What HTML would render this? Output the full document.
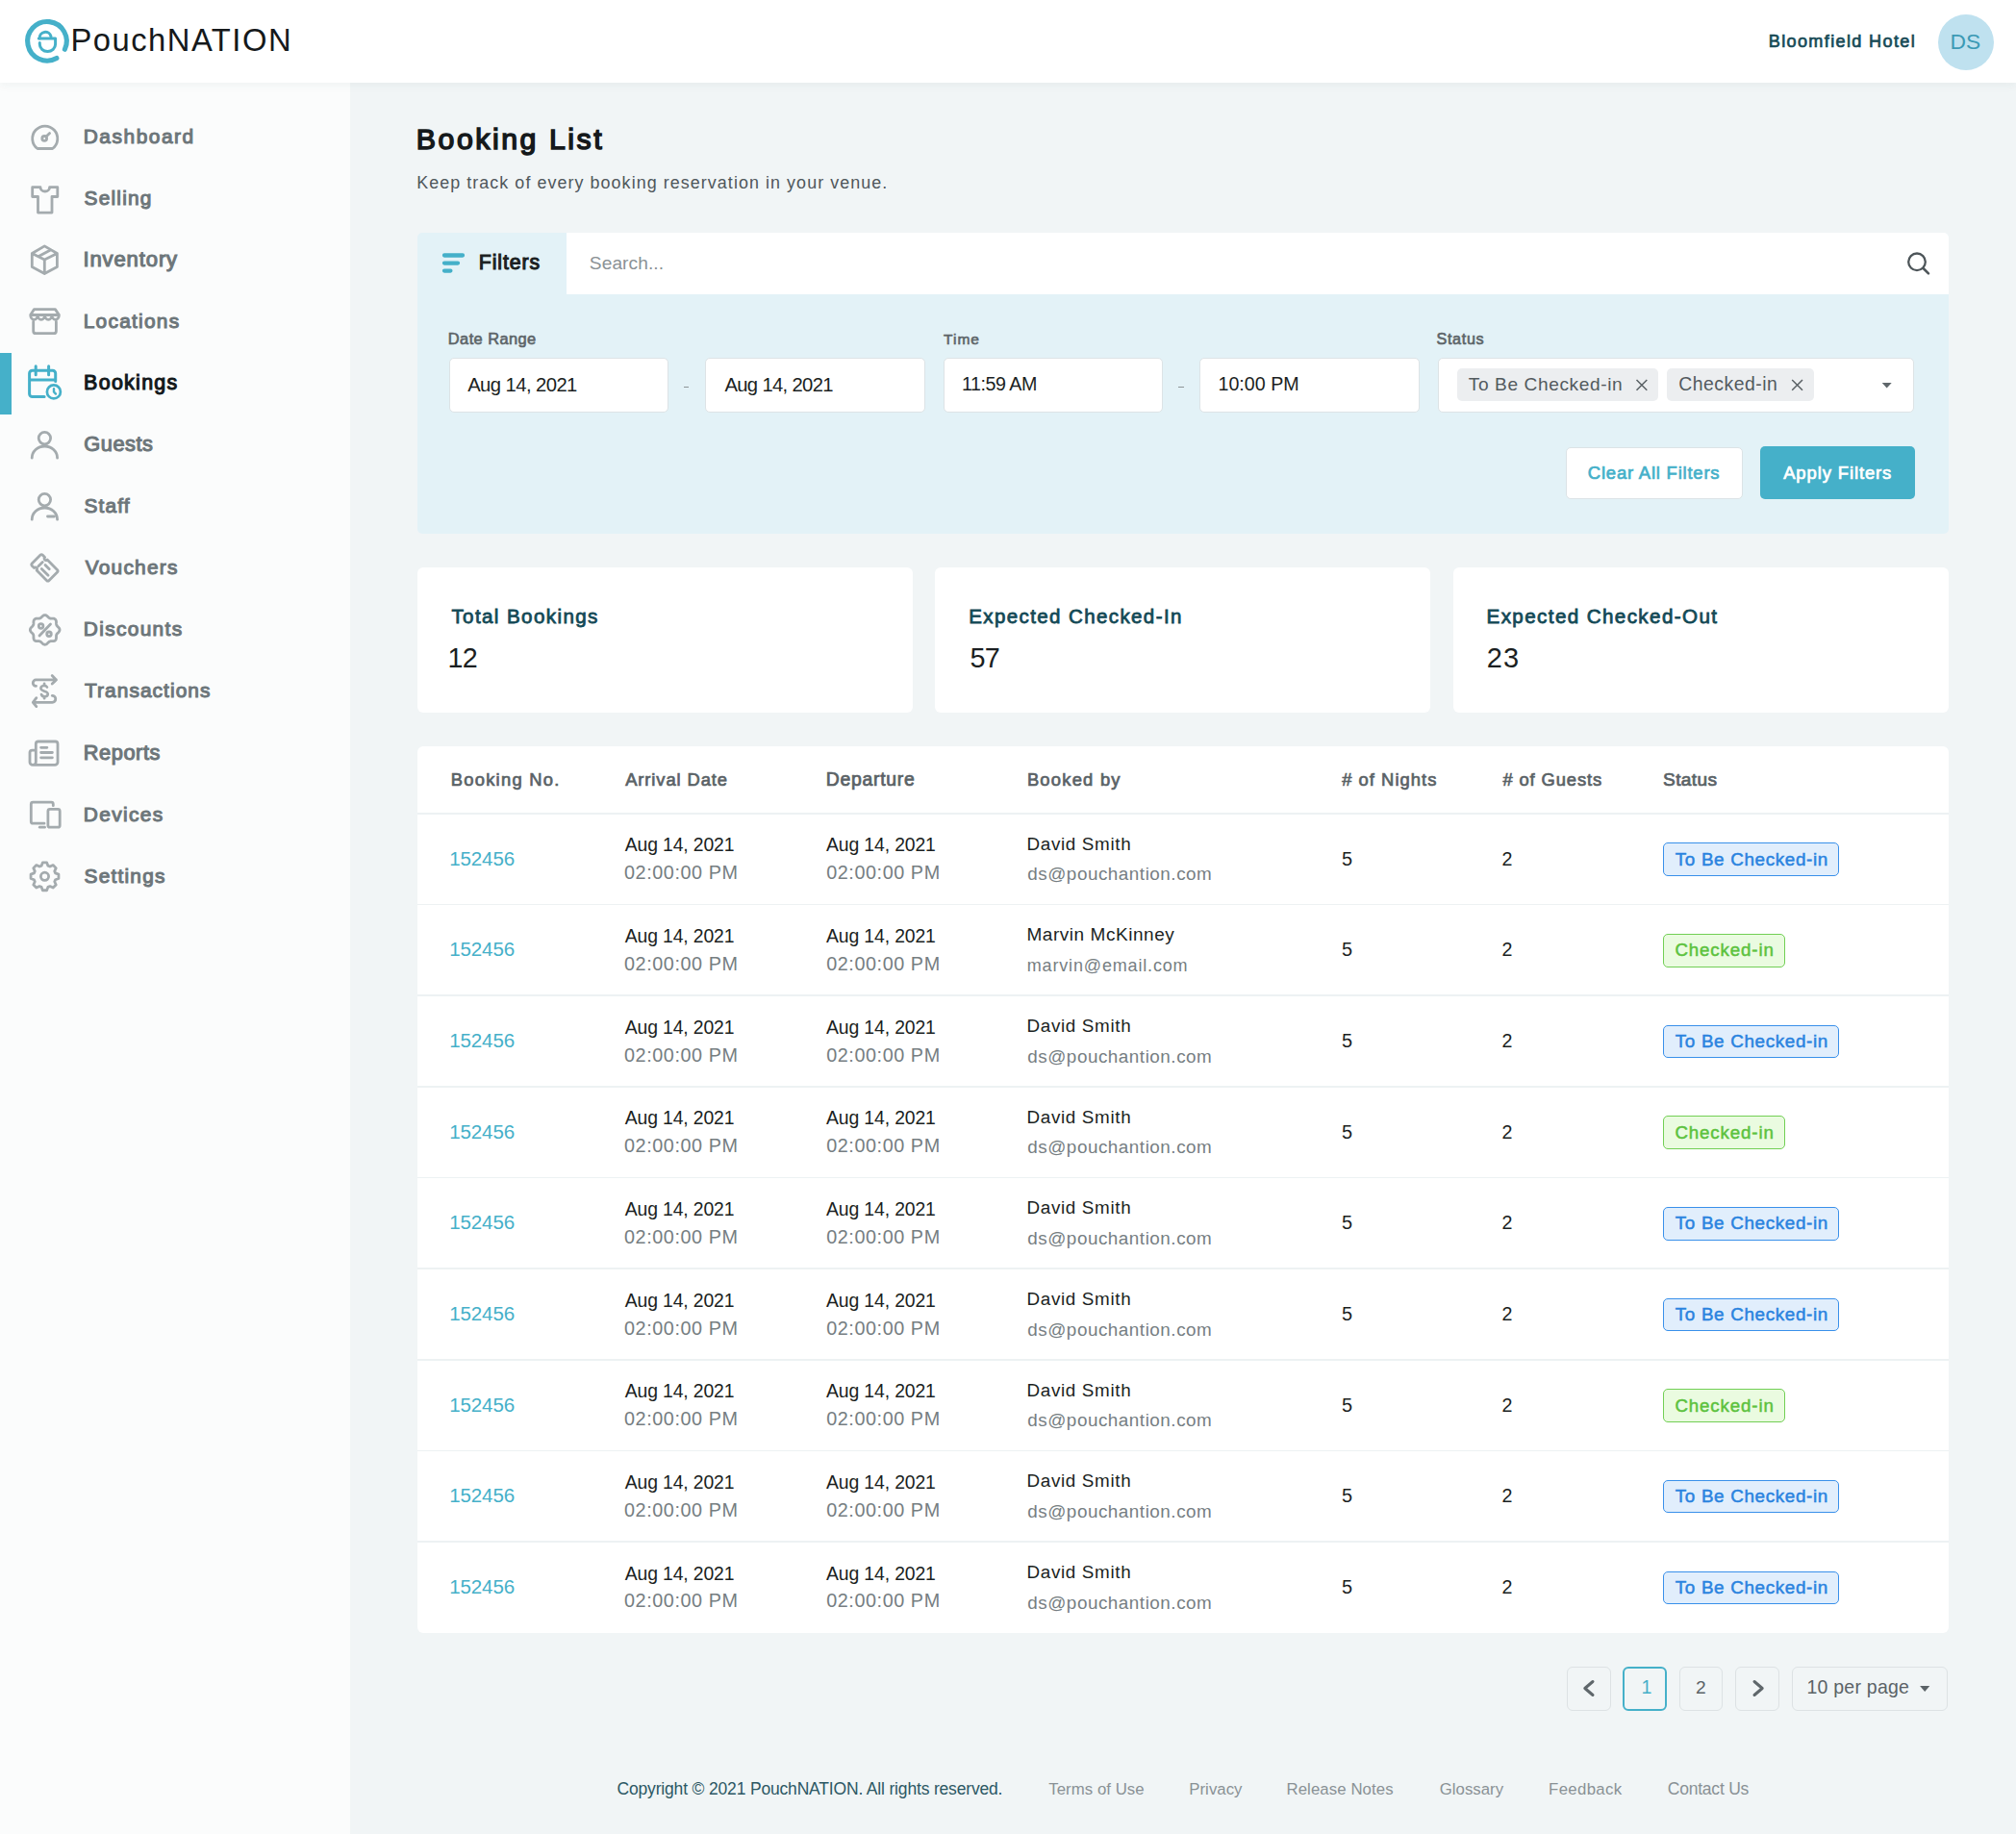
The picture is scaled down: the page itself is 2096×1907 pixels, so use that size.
<!DOCTYPE html>
<html><head><meta charset="utf-8"><title>Booking List</title>
<style>
html,body{margin:0;padding:0;width:2096px;height:1907px;overflow:hidden;background:#f1f5f6}
body{position:relative;font-family:"Liberation Sans",sans-serif}
.t{position:absolute;white-space:pre;line-height:1}
.b{position:absolute}
</style></head><body>
<div class="b" style="left:0px;top:0px;width:2096px;height:1907px;background:#f1f5f6"></div>
<div class="b" style="left:0px;top:86px;width:364px;height:1821px;background:#fbfcfc"></div>
<div class="b" style="left:0px;top:0px;width:2096px;height:86px;background:#ffffff;box-shadow:0 2px 10px rgba(40,60,70,0.06)"></div>
<svg class="b" style="left:0px;top:0px" width="90" height="86" viewBox="0 0 90 86" fill="none">
<path d="M67.4 51.3 A20.3 20.3 0 1 0 58.9 60.5" stroke="#45b0c9" stroke-width="5.1" stroke-linecap="round"/>
<path d="M40.3 39.9 H57.6 V46.1 A8.15 7.5 0 0 1 41.3 46.1 V44.4" stroke="#45b0c9" stroke-width="3" stroke-linecap="round" stroke-linejoin="round"/>
<path d="M41.2 39.9 A6 6 0 0 1 53 37.9" stroke="#45b0c9" stroke-width="3" stroke-linecap="round"/>
</svg>
<div class="t" style="left:73.38px;top:25.97px;font-size:32.75px;font-weight:400;color:#15191b;letter-spacing:1.505px;">PouchNATION</div>
<div class="t" style="left:1838.72px;top:33.99px;font-size:18.08px;font-weight:400;color:#174a56;letter-spacing:1.358px;-webkit-text-stroke:0.69px #174a56;">Bloomfield Hotel</div>
<div class="b" style="left:2014.5px;top:14.5px;width:58px;height:58px;border-radius:50%;background:#bfe1ef"></div>
<div class="t" style="left:2027.57px;top:31.68px;font-size:22.82px;font-weight:400;color:#3c9ab5;letter-spacing:-0.156px;">DS</div>
<svg class="b" style="left:0px;top:86px" width="364" height="900" viewBox="0 86 364 900" fill="none">
<path d="M38.9 154.5 A13.05 13.05 0 1 1 54.6 154.5 Z" stroke="#a4abae" stroke-width="2.8" stroke-linecap="round" stroke-linejoin="round" fill="none"/>
<circle cx="46.2" cy="143.9" r="2.4" stroke="#a4abae" stroke-width="2.8" stroke-linecap="round" stroke-linejoin="round" fill="none"/><path d="M48 142 L51.6 138.6" stroke="#a4abae" stroke-width="2.8" stroke-linecap="round" stroke-linejoin="round" fill="none"/>
<path d="M33.7 194.7 H42 A4.8 4.3 0 0 0 51.6 194.7 H59.8 V204.5 H54 V221.1 H39.5 V204.5 H33.7 Z" stroke="#a4abae" stroke-width="2.8" stroke-linecap="round" stroke-linejoin="round" fill="none"/>
<path d="M46.3 255.9 L59.4 263.5 V277.5 L46.3 284.5 L33.3 277.5 V263.5 Z M33.3 263.5 L46.3 269.9 L59.4 263.5 M46.3 269.9 V284.5 M39.8 266.7 L52.9 259.7" stroke="#a4abae" stroke-width="2.8" stroke-linecap="round" stroke-linejoin="round" fill="none"/>
<path d="M35.5 321.6 H57.4 L61.4 327.5 A3.71 4.8 0 0 1 53.98 327.5 A3.71 4.8 0 0 1 46.55 327.5 A3.71 4.8 0 0 1 39.13 327.5 A3.71 4.8 0 0 1 31.7 327.5 Z M31.7 327.5 H61.4" stroke="#a4abae" stroke-width="2.8" stroke-linecap="round" stroke-linejoin="round" fill="none"/>
<path d="M34.7 334.5 V344.2 A2.5 2.5 0 0 0 37.2 346.7 H55.9 A2.5 2.5 0 0 0 58.4 344.2 V334.5" stroke="#a4abae" stroke-width="2.8" stroke-linecap="round" stroke-linejoin="round" fill="none"/>
<circle cx="46.4" cy="455.6" r="6.2" stroke="#a4abae" stroke-width="2.8" stroke-linecap="round" stroke-linejoin="round" fill="none"/><path d="M33.2 476.2 A13.2 12.2 0 0 1 59.6 476.2" stroke="#a4abae" stroke-width="2.8" stroke-linecap="round" stroke-linejoin="round" fill="none"/>
<circle cx="46.4" cy="519.6" r="6.2" stroke="#a4abae" stroke-width="2.8" stroke-linecap="round" stroke-linejoin="round" fill="none"/><path d="M33.2 540.2 A13.2 12.2 0 0 1 59.6 540.2" stroke="#a4abae" stroke-width="2.8" stroke-linecap="round" stroke-linejoin="round" fill="none"/><path d="M49.5 537 H56.5" stroke="#a4abae" stroke-width="2.8" stroke-linecap="round" stroke-linejoin="round" fill="none"/>
<g transform="translate(46.45 590.4) rotate(45)"><path d="M-11 -7.8 H-7.6 A1.8 1.8 0 0 0 -4 -7.8 H11 A1.5 1.5 0 0 1 12.5 -6.3 V6.3 A1.5 1.5 0 0 1 11 7.8 H-4 A1.8 1.8 0 0 0 -7.6 7.8 H-11 A1.5 1.5 0 0 1 -12.5 6.3 V-6.3 A1.5 1.5 0 0 1 -11 -7.8 Z" stroke="#a4abae" stroke-width="2.8" stroke-linecap="round" stroke-linejoin="round" fill="none"/>
<path d="M-5.8 -2.7 V3.5 M-1.6 -2.4 H4.4 M-1.5 3 H8.1" stroke="#a4abae" stroke-width="2.8" stroke-linecap="round" stroke-linejoin="round" fill="none"/></g>
<path d="M46.70 639.55 L47.30 639.62 L47.89 639.82 L48.45 640.13 L48.98 640.52 L49.47 640.97 L49.93 641.44 L50.37 641.88 L50.80 642.28 L51.24 642.60 L51.69 642.84 L52.19 643.00 L52.72 643.08 L53.31 643.10 L53.93 643.10 L54.59 643.09 L55.26 643.12 L55.91 643.22 L56.53 643.39 L57.08 643.67 L57.55 644.05 L57.93 644.52 L58.21 645.07 L58.38 645.69 L58.48 646.34 L58.51 647.01 L58.50 647.67 L58.50 648.29 L58.52 648.88 L58.60 649.41 L58.76 649.91 L59.00 650.36 L59.32 650.80 L59.72 651.23 L60.16 651.67 L60.63 652.13 L61.08 652.62 L61.47 653.15 L61.78 653.71 L61.98 654.30 L62.05 654.90 L61.98 655.50 L61.78 656.09 L61.47 656.65 L61.08 657.18 L60.63 657.67 L60.16 658.13 L59.72 658.57 L59.32 659.00 L59.00 659.44 L58.76 659.89 L58.60 660.39 L58.52 660.92 L58.50 661.51 L58.50 662.13 L58.51 662.79 L58.48 663.46 L58.38 664.11 L58.21 664.73 L57.93 665.28 L57.55 665.75 L57.08 666.13 L56.53 666.41 L55.91 666.58 L55.26 666.68 L54.59 666.71 L53.93 666.70 L53.31 666.70 L52.72 666.72 L52.19 666.80 L51.69 666.96 L51.24 667.20 L50.80 667.52 L50.37 667.92 L49.93 668.36 L49.47 668.83 L48.98 669.28 L48.45 669.67 L47.89 669.98 L47.30 670.18 L46.70 670.25 L46.10 670.18 L45.51 669.98 L44.95 669.67 L44.42 669.28 L43.93 668.83 L43.47 668.36 L43.03 667.92 L42.60 667.52 L42.16 667.20 L41.71 666.96 L41.21 666.80 L40.68 666.72 L40.09 666.70 L39.47 666.70 L38.81 666.71 L38.14 666.68 L37.49 666.58 L36.87 666.41 L36.32 666.13 L35.85 665.75 L35.47 665.28 L35.19 664.73 L35.02 664.11 L34.92 663.46 L34.89 662.79 L34.90 662.13 L34.90 661.51 L34.88 660.92 L34.80 660.39 L34.64 659.89 L34.40 659.44 L34.08 659.00 L33.68 658.57 L33.24 658.13 L32.77 657.67 L32.32 657.18 L31.93 656.65 L31.62 656.09 L31.42 655.50 L31.35 654.90 L31.42 654.30 L31.62 653.71 L31.93 653.15 L32.32 652.62 L32.77 652.13 L33.24 651.67 L33.68 651.23 L34.08 650.80 L34.40 650.36 L34.64 649.91 L34.80 649.41 L34.88 648.88 L34.90 648.29 L34.90 647.67 L34.89 647.01 L34.92 646.34 L35.02 645.69 L35.19 645.07 L35.47 644.52 L35.85 644.05 L36.32 643.67 L36.87 643.39 L37.49 643.22 L38.14 643.12 L38.81 643.09 L39.47 643.10 L40.09 643.10 L40.68 643.08 L41.21 643.00 L41.71 642.84 L42.16 642.60 L42.60 642.28 L43.03 641.88 L43.47 641.44 L43.93 640.97 L44.42 640.52 L44.95 640.13 L45.51 639.82 L46.10 639.62 Z" stroke="#a4abae" stroke-width="2.8" stroke-linecap="round" stroke-linejoin="round" fill="none"/>
<circle cx="42.6" cy="651" r="2.3" stroke="#a4abae" stroke-width="2.8" stroke-linecap="round" stroke-linejoin="round" fill="none"/><circle cx="51" cy="659.3" r="2.3" stroke="#a4abae" stroke-width="2.8" stroke-linecap="round" stroke-linejoin="round" fill="none"/><path d="M41 661 L52.5 649" stroke="#a4abae" stroke-width="2.8" stroke-linecap="round" stroke-linejoin="round" fill="none"/>
<path d="M37.5 713.3 A3.2 3.2 0 0 1 37.4 706.9 H58.5 M54.2 702.6 L58.5 706.9 L54.2 711.1" stroke="#a4abae" stroke-width="2.8" stroke-linecap="round" stroke-linejoin="round" fill="none"/>
<path d="M54.2 723.3 A3.5 3.5 0 0 1 54.4 730.3 H34.3 M37.8 725.7 L34.3 730.3 L37.8 734.6" stroke="#a4abae" stroke-width="2.8" stroke-linecap="round" stroke-linejoin="round" fill="none"/>
<path d="M49 714.6 C48 712.3 42.4 712.3 42.4 715.8 C42.4 719.2 49.8 718.2 49.8 721.6 C49.8 725 44 725.2 43 722" stroke="#a4abae" stroke-width="2.6" stroke-linecap="round" fill="none"/>
<path d="M46.1 711 V712.3 M46.1 724.8 V726.2" stroke="#a4abae" stroke-width="2.8" stroke-linecap="round" stroke-linejoin="round" fill="none"/>
<path d="M37.3 780.1 H33.5 A2.5 2.5 0 0 0 31 782.6 V792.4 A3 3 0 0 0 34 795.4 H57 A3 3 0 0 0 60 792.4 V773.5 A2.5 2.5 0 0 0 57.5 771 H39.8 A2.5 2.5 0 0 0 37.3 773.5 V792.4 A3 3 0 0 1 34 795.4" stroke="#a4abae" stroke-width="2.8" stroke-linecap="round" stroke-linejoin="round" fill="none"/>
<path d="M42.6 777.3 H48.9 M42.6 782.5 H54.4 M42.6 787.8 H54.4" stroke="#a4abae" stroke-width="2.8" stroke-linecap="round" stroke-linejoin="round" fill="none"/>
<path d="M55.3 837.7 V836.2 A2 2 0 0 0 53.3 834.2 H34.3 A2 2 0 0 0 32.3 836.2 V854.2 A2 2 0 0 0 34.3 856.2 H46" stroke="#a4abae" stroke-width="2.8" stroke-linecap="round" stroke-linejoin="round" fill="none"/>
<path d="M41.3 860.2 H46.5" stroke="#a4abae" stroke-width="2.8" stroke-linecap="round" stroke-linejoin="round" fill="none"/>
<rect x="49.9" y="841.4" width="12.3" height="18.8" rx="2" stroke="#a4abae" stroke-width="2.8" stroke-linecap="round" stroke-linejoin="round" fill="none"/>
<path d="M43.11 900.21 L44.34 896.86 L48.66 896.86 L49.89 900.21 L51.95 901.06 L55.18 899.56 L58.24 902.62 L56.74 905.85 L57.59 907.91 L60.94 909.14 L60.94 913.46 L57.59 914.69 L56.74 916.75 L58.24 919.98 L55.18 923.04 L51.95 921.54 L49.89 922.39 L48.66 925.74 L44.34 925.74 L43.11 922.39 L41.05 921.54 L37.82 923.04 L34.76 919.98 L36.26 916.75 L35.41 914.69 L32.06 913.46 L32.06 909.14 L35.41 907.91 L36.26 905.85 L34.76 902.62 L37.82 899.56 L41.05 901.06 Z" stroke="#a4abae" stroke-width="2.8" stroke-linecap="round" stroke-linejoin="round" fill="none"/>
<circle cx="46.5" cy="911.3" r="4.1" stroke="#a4abae" stroke-width="2.8" stroke-linecap="round" stroke-linejoin="round" fill="none"/>
</svg>
<div class="b" style="left:0px;top:367px;width:12px;height:64px;background:#45b0c9"></div>
<svg class="b" style="left:0px;top:367px" width="100" height="64" viewBox="0 367 100 64" fill="none"><path d="M46.1 412.5 H33.6 A3 3 0 0 1 30.6 409.5 V388.2 A3 3 0 0 1 33.6 385.2 H54.7 A3 3 0 0 1 57.7 388.2 V396.6 M30.6 395.1 H57.7 M37.2 380.8 V389.7 M50.6 380.8 V389.7" stroke="#45b0c9" stroke-width="3" stroke-linecap="round" stroke-linejoin="round" fill="none"/><circle cx="55.9" cy="407.4" r="7" stroke="#45b0c9" stroke-width="2.7" fill="none"/><path d="M56 404.3 V407.5 L58 409.6" stroke="#45b0c9" stroke-width="2.4" stroke-linecap="round" stroke-linejoin="round" fill="none"/></svg>
<div class="t" style="left:86.75px;top:132.31px;font-size:20.89px;font-weight:400;color:#6d767a;letter-spacing:1.541px;-webkit-text-stroke:1.04px #6d767a;">Dashboard</div>
<div class="t" style="left:87.58px;top:196.36px;font-size:20.89px;font-weight:400;color:#6d767a;letter-spacing:1.196px;-webkit-text-stroke:1.04px #6d767a;">Selling</div>
<div class="t" style="left:86.45px;top:259.41px;font-size:22.07px;font-weight:400;color:#6d767a;letter-spacing:0.870px;-webkit-text-stroke:1.10px #6d767a;">Inventory</div>
<div class="t" style="left:86.75px;top:324.46px;font-size:20.89px;font-weight:400;color:#6d767a;letter-spacing:1.256px;-webkit-text-stroke:1.04px #6d767a;">Locations</div>
<div class="t" style="left:87.11px;top:388.06px;font-size:21.43px;font-weight:400;color:#12181b;letter-spacing:1.290px;-webkit-text-stroke:1.07px #12181b;">Bookings</div>
<div class="t" style="left:87.35px;top:450.82px;font-size:21.77px;font-weight:400;color:#6d767a;letter-spacing:0.534px;-webkit-text-stroke:1.09px #6d767a;">Guests</div>
<div class="t" style="left:87.58px;top:515.61px;font-size:20.89px;font-weight:400;color:#6d767a;letter-spacing:1.095px;-webkit-text-stroke:1.04px #6d767a;">Staff</div>
<div class="t" style="left:88.63px;top:579.66px;font-size:20.89px;font-weight:400;color:#6d767a;letter-spacing:1.266px;-webkit-text-stroke:1.04px #6d767a;">Vouchers</div>
<div class="t" style="left:86.75px;top:643.71px;font-size:20.89px;font-weight:400;color:#6d767a;letter-spacing:1.343px;-webkit-text-stroke:1.04px #6d767a;">Discounts</div>
<div class="t" style="left:88.00px;top:707.76px;font-size:20.89px;font-weight:400;color:#6d767a;letter-spacing:1.067px;-webkit-text-stroke:1.04px #6d767a;">Transactions</div>
<div class="t" style="left:86.69px;top:772.07px;font-size:21.77px;font-weight:400;color:#6d767a;letter-spacing:0.590px;-webkit-text-stroke:1.09px #6d767a;">Reports</div>
<div class="t" style="left:86.75px;top:836.86px;font-size:20.89px;font-weight:400;color:#6d767a;letter-spacing:1.348px;-webkit-text-stroke:1.04px #6d767a;">Devices</div>
<div class="t" style="left:87.58px;top:900.91px;font-size:20.89px;font-weight:400;color:#6d767a;letter-spacing:1.201px;-webkit-text-stroke:1.04px #6d767a;">Settings</div>
<div class="t" style="left:432.78px;top:130.07px;font-size:30.27px;font-weight:400;color:#15191b;letter-spacing:2.551px;-webkit-text-stroke:1.51px #15191b;">Booking List</div>
<div class="t" style="left:433.17px;top:182.05px;font-size:17.89px;font-weight:400;color:#4f575b;letter-spacing:1.073px;">Keep track of every booking reservation in your venue.</div>
<div class="b" style="left:434px;top:242px;width:1592px;height:312.8px;background:#e3f2f7;border-radius:5px"></div>
<div class="b" style="left:588.5px;top:242px;width:1437.5px;height:63.5px;background:#ffffff;border-radius:0 5px 0 0"></div>
<svg class="b" style="left:440px;top:250px" width="60" height="40" viewBox="440 250 60 40" fill="none"><path d="M462 265.5 H481 M462 273.6 H476 M462 281.6 H468.4" stroke="#45b0c9" stroke-width="4.3" stroke-linecap="round"/></svg>
<div class="t" style="left:497.72px;top:262.77px;font-size:21.29px;font-weight:400;color:#1b1f22;letter-spacing:0.929px;-webkit-text-stroke:1.06px #1b1f22;">Filters</div>
<div class="t" style="left:612.84px;top:263.60px;font-size:19.13px;font-weight:400;color:#8a9195;letter-spacing:0.096px;">Search...</div>
<svg class="b" style="left:1975px;top:255px" width="40" height="40" viewBox="1975 255 40 40" fill="none"><circle cx="1993" cy="272.3" r="8.8" stroke="#4d5559" stroke-width="2.3"/><path d="M1999.6 279 L2005 284.4" stroke="#4d5559" stroke-width="2.5" stroke-linecap="round"/></svg>
<div class="t" style="left:465.82px;top:344.10px;font-size:16.41px;font-weight:400;color:#5c6468;letter-spacing:0.425px;-webkit-text-stroke:0.62px #5c6468;">Date Range</div>
<div class="t" style="left:981.00px;top:344.85px;font-size:15.54px;font-weight:400;color:#5c6468;letter-spacing:1.015px;-webkit-text-stroke:0.59px #5c6468;">Time</div>
<div class="t" style="left:1493.48px;top:344.30px;font-size:16.19px;font-weight:400;color:#5c6468;letter-spacing:0.656px;-webkit-text-stroke:0.62px #5c6468;">Status</div>
<div class="b" style="left:466.5px;top:372px;width:228.7px;height:56.5px;background:#ffffff;border:1.2px solid #dde3e6;border-radius:5px;box-sizing:border-box"></div>
<div class="b" style="left:733px;top:372px;width:228.7px;height:56.5px;background:#ffffff;border:1.2px solid #dde3e6;border-radius:5px;box-sizing:border-box"></div>
<div class="b" style="left:980.5px;top:372px;width:228.8px;height:56.5px;background:#ffffff;border:1.2px solid #dde3e6;border-radius:5px;box-sizing:border-box"></div>
<div class="b" style="left:1247.3px;top:372px;width:228.7px;height:56.5px;background:#ffffff;border:1.2px solid #dde3e6;border-radius:5px;box-sizing:border-box"></div>
<div class="t" style="left:486.20px;top:390.46px;font-size:20.24px;font-weight:400;color:#1b1f22;letter-spacing:-0.564px;">Aug 14, 2021</div>
<div class="t" style="left:753.40px;top:390.46px;font-size:20.24px;font-weight:400;color:#1b1f22;letter-spacing:-0.655px;">Aug 14, 2021</div>
<div class="t" style="left:1000.03px;top:389.55px;font-size:19.66px;font-weight:400;color:#1b1f22;letter-spacing:-0.466px;">11:59 AM</div>
<div class="t" style="left:1266.43px;top:389.55px;font-size:19.66px;font-weight:400;color:#1b1f22;letter-spacing:0.026px;">10:00 PM</div>
<div class="b" style="left:710.7px;top:401.8px;width:5.3px;height:1.5px;background:#8e9598"></div>
<div class="b" style="left:1225.3px;top:401.8px;width:5.3px;height:1.5px;background:#8e9598"></div>
<div class="b" style="left:1494.5px;top:372px;width:495.7px;height:56.5px;background:#ffffff;border:1.2px solid #dde3e6;border-radius:5px;box-sizing:border-box"></div>
<div class="b" style="left:1515px;top:382.8px;width:209.2px;height:34.7px;background:#eceef0;border-radius:5px"></div>
<div class="b" style="left:1733.3px;top:382.8px;width:152.4px;height:34.7px;background:#eceef0;border-radius:5px"></div>
<div class="t" style="left:1526.82px;top:390.00px;font-size:19.13px;font-weight:400;color:#535a5e;letter-spacing:0.601px;">To Be Checked-in</div>
<div class="t" style="left:1745.23px;top:389.77px;font-size:19.40px;font-weight:400;color:#535a5e;letter-spacing:0.506px;">Checked-in</div>
<svg class="b" style="left:1690px;top:385px" width="290" height="30" viewBox="1690 385 290 30" fill="none"><path d="M1701.5 395 L1712.3 405.8 M1712.3 395 L1701.5 405.8 M1863.2 395 L1874 405.8 M1874 395 L1863.2 405.8" stroke="#5a6165" stroke-width="1.5"/><path d="M1956.7 398.1 H1966.7 L1961.7 403.6 Z" fill="#5f676b"/></svg>
<div class="b" style="left:1628px;top:464.5px;width:183.5px;height:54.5px;background:#ffffff;border:1.2px solid #dce3e6;border-radius:5px;box-sizing:border-box"></div>
<div class="t" style="left:1650.85px;top:483.35px;font-size:18.48px;font-weight:400;color:#45b0c9;letter-spacing:0.783px;-webkit-text-stroke:0.70px #45b0c9;">Clear All Filters</div>
<div class="b" style="left:1829.5px;top:464px;width:161.5px;height:55px;background:#45b0c9;border-radius:5px"></div>
<div class="t" style="left:1854.17px;top:483.35px;font-size:18.48px;font-weight:400;color:#ffffff;letter-spacing:0.879px;-webkit-text-stroke:0.70px #ffffff;">Apply Filters</div>
<div class="b" style="left:434px;top:589.7px;width:514.7px;height:151px;background:#ffffff;border-radius:6px"></div>
<div class="t" style="left:469.40px;top:630.84px;font-size:20.62px;font-weight:400;color:#134956;letter-spacing:1.381px;-webkit-text-stroke:0.78px #134956;">Total Bookings</div>
<div class="t" style="left:465.54px;top:670.19px;font-size:28.71px;font-weight:400;color:#1b1f22;letter-spacing:-0.800px;">12</div>
<div class="b" style="left:972.3px;top:589.7px;width:514.7px;height:151px;background:#ffffff;border-radius:6px"></div>
<div class="t" style="left:1007.17px;top:630.65px;font-size:20.49px;font-weight:400;color:#134956;letter-spacing:1.409px;-webkit-text-stroke:0.78px #134956;">Expected Checked-In</div>
<div class="t" style="left:1008.44px;top:669.99px;font-size:28.83px;font-weight:400;color:#1b1f22;letter-spacing:-0.800px;">57</div>
<div class="b" style="left:1511px;top:589.7px;width:514.7px;height:151px;background:#ffffff;border-radius:6px"></div>
<div class="t" style="left:1545.56px;top:630.94px;font-size:20.62px;font-weight:400;color:#134956;letter-spacing:1.388px;-webkit-text-stroke:0.78px #134956;">Expected Checked-Out</div>
<div class="t" style="left:1545.75px;top:669.95px;font-size:28.99px;font-weight:400;color:#1b1f22;letter-spacing:1.026px;">23</div>
<div class="b" style="left:434px;top:775.8px;width:1592px;height:921.8px;background:#ffffff;border-radius:6px"></div>
<div class="t" style="left:468.70px;top:802.27px;font-size:18.35px;font-weight:400;color:#5a6266;letter-spacing:1.279px;-webkit-text-stroke:0.70px #5a6266;">Booking No.</div>
<div class="t" style="left:650.17px;top:802.27px;font-size:18.35px;font-weight:400;color:#5a6266;letter-spacing:0.912px;-webkit-text-stroke:0.70px #5a6266;">Arrival Date</div>
<div class="t" style="left:858.84px;top:801.39px;font-size:19.39px;font-weight:400;color:#5a6266;letter-spacing:0.710px;-webkit-text-stroke:0.74px #5a6266;">Departure</div>
<div class="t" style="left:1067.90px;top:802.27px;font-size:18.35px;font-weight:400;color:#5a6266;letter-spacing:1.244px;-webkit-text-stroke:0.70px #5a6266;">Booked by</div>
<div class="t" style="left:1395.18px;top:802.27px;font-size:18.35px;font-weight:400;color:#5a6266;letter-spacing:1.048px;-webkit-text-stroke:0.70px #5a6266;"># of Nights</div>
<div class="t" style="left:1562.38px;top:802.27px;font-size:18.35px;font-weight:400;color:#5a6266;letter-spacing:0.904px;-webkit-text-stroke:0.70px #5a6266;"># of Guests</div>
<div class="t" style="left:1729.02px;top:800.61px;font-size:19.12px;font-weight:400;color:#5a6266;letter-spacing:0.375px;-webkit-text-stroke:0.73px #5a6266;">Status</div>
<div class="b" style="left:434px;top:845.0px;width:1592px;height:1.8px;background:#edf2f3"></div>
<div class="t" style="left:467.16px;top:883.32px;font-size:20.53px;font-weight:400;color:#45b0c9;letter-spacing:-0.097px;">152456</div>
<div class="t" style="left:649.80px;top:868.99px;font-size:19.38px;font-weight:400;color:#1b1f22;letter-spacing:-0.139px;">Aug 14, 2021</div>
<div class="t" style="left:649.01px;top:897.53px;font-size:19.81px;font-weight:400;color:#767e82;letter-spacing:0.567px;">02:00:00 PM</div>
<div class="t" style="left:859.00px;top:868.99px;font-size:19.38px;font-weight:400;color:#1b1f22;letter-spacing:-0.120px;">Aug 14, 2021</div>
<div class="t" style="left:859.21px;top:897.53px;font-size:19.81px;font-weight:400;color:#767e82;letter-spacing:0.567px;">02:00:00 PM</div>
<div class="t" style="left:1067.49px;top:868.84px;font-size:18.85px;font-weight:400;color:#1b1f22;letter-spacing:0.663px;">David Smith</div>
<div class="t" style="left:1068.25px;top:900.44px;font-size:18.85px;font-weight:400;color:#767e82;letter-spacing:0.529px;">ds@pouchantion.com</div>
<div class="t" style="left:1395.00px;top:883.91px;font-size:19.95px;font-weight:400;color:#1b1f22;letter-spacing:0.000px;">5</div>
<div class="t" style="left:1561.42px;top:884.15px;font-size:19.66px;font-weight:400;color:#1b1f22;letter-spacing:0.000px;">2</div>
<div class="b" style="left:1729.4px;top:876.4px;width:183.1px;height:34.5px;background:#e1eefc;border:1.8px solid #3990ea;border-radius:5px;box-sizing:border-box"></div>
<div class="t" style="left:1741.81px;top:884.82px;font-size:18.87px;font-weight:400;color:#2a83df;letter-spacing:0.644px;-webkit-text-stroke:0.49px #2a83df;">To Be Checked-in</div>
<div class="b" style="left:434px;top:939.65px;width:1592px;height:1.8px;background:#edf2f3"></div>
<div class="t" style="left:467.16px;top:976.97px;font-size:20.53px;font-weight:400;color:#45b0c9;letter-spacing:-0.097px;">152456</div>
<div class="t" style="left:649.80px;top:963.64px;font-size:19.38px;font-weight:400;color:#1b1f22;letter-spacing:-0.139px;">Aug 14, 2021</div>
<div class="t" style="left:649.01px;top:993.18px;font-size:19.81px;font-weight:400;color:#767e82;letter-spacing:0.567px;">02:00:00 PM</div>
<div class="t" style="left:859.00px;top:963.64px;font-size:19.38px;font-weight:400;color:#1b1f22;letter-spacing:-0.120px;">Aug 14, 2021</div>
<div class="t" style="left:859.21px;top:993.18px;font-size:19.81px;font-weight:400;color:#767e82;letter-spacing:0.567px;">02:00:00 PM</div>
<div class="t" style="left:1067.48px;top:962.27px;font-size:18.99px;font-weight:400;color:#1b1f22;letter-spacing:0.548px;">Marvin McKinney</div>
<div class="t" style="left:1067.74px;top:994.79px;font-size:18.03px;font-weight:400;color:#767e82;letter-spacing:0.830px;">marvin@email.com</div>
<div class="t" style="left:1395.00px;top:977.56px;font-size:19.95px;font-weight:400;color:#1b1f22;letter-spacing:0.000px;">5</div>
<div class="t" style="left:1561.42px;top:977.80px;font-size:19.66px;font-weight:400;color:#1b1f22;letter-spacing:0.000px;">2</div>
<div class="b" style="left:1729.4px;top:971.05px;width:126.3px;height:34.5px;background:#eafbe0;border:1.8px solid #72cf55;border-radius:5px;box-sizing:border-box"></div>
<div class="t" style="left:1741.45px;top:979.49px;font-size:18.73px;font-weight:400;color:#5cc23e;letter-spacing:0.856px;-webkit-text-stroke:0.49px #5cc23e;">Checked-in</div>
<div class="b" style="left:434px;top:1034.3px;width:1592px;height:1.8px;background:#edf2f3"></div>
<div class="t" style="left:467.16px;top:1071.62px;font-size:20.53px;font-weight:400;color:#45b0c9;letter-spacing:-0.097px;">152456</div>
<div class="t" style="left:649.80px;top:1059.29px;font-size:19.38px;font-weight:400;color:#1b1f22;letter-spacing:-0.139px;">Aug 14, 2021</div>
<div class="t" style="left:649.01px;top:1087.83px;font-size:19.81px;font-weight:400;color:#767e82;letter-spacing:0.567px;">02:00:00 PM</div>
<div class="t" style="left:859.00px;top:1059.29px;font-size:19.38px;font-weight:400;color:#1b1f22;letter-spacing:-0.120px;">Aug 14, 2021</div>
<div class="t" style="left:859.21px;top:1087.83px;font-size:19.81px;font-weight:400;color:#767e82;letter-spacing:0.567px;">02:00:00 PM</div>
<div class="t" style="left:1067.49px;top:1058.14px;font-size:18.85px;font-weight:400;color:#1b1f22;letter-spacing:0.663px;">David Smith</div>
<div class="t" style="left:1068.25px;top:1089.74px;font-size:18.85px;font-weight:400;color:#767e82;letter-spacing:0.529px;">ds@pouchantion.com</div>
<div class="t" style="left:1395.00px;top:1073.21px;font-size:19.95px;font-weight:400;color:#1b1f22;letter-spacing:0.000px;">5</div>
<div class="t" style="left:1561.42px;top:1073.45px;font-size:19.66px;font-weight:400;color:#1b1f22;letter-spacing:0.000px;">2</div>
<div class="b" style="left:1729.4px;top:1065.7px;width:183.1px;height:34.5px;background:#e1eefc;border:1.8px solid #3990ea;border-radius:5px;box-sizing:border-box"></div>
<div class="t" style="left:1741.81px;top:1074.12px;font-size:18.87px;font-weight:400;color:#2a83df;letter-spacing:0.644px;-webkit-text-stroke:0.49px #2a83df;">To Be Checked-in</div>
<div class="b" style="left:434px;top:1128.95px;width:1592px;height:1.8px;background:#edf2f3"></div>
<div class="t" style="left:467.16px;top:1167.27px;font-size:20.53px;font-weight:400;color:#45b0c9;letter-spacing:-0.097px;">152456</div>
<div class="t" style="left:649.80px;top:1152.94px;font-size:19.38px;font-weight:400;color:#1b1f22;letter-spacing:-0.139px;">Aug 14, 2021</div>
<div class="t" style="left:649.01px;top:1182.48px;font-size:19.81px;font-weight:400;color:#767e82;letter-spacing:0.567px;">02:00:00 PM</div>
<div class="t" style="left:859.00px;top:1152.94px;font-size:19.38px;font-weight:400;color:#1b1f22;letter-spacing:-0.120px;">Aug 14, 2021</div>
<div class="t" style="left:859.21px;top:1182.48px;font-size:19.81px;font-weight:400;color:#767e82;letter-spacing:0.567px;">02:00:00 PM</div>
<div class="t" style="left:1067.49px;top:1152.79px;font-size:18.85px;font-weight:400;color:#1b1f22;letter-spacing:0.663px;">David Smith</div>
<div class="t" style="left:1068.25px;top:1184.39px;font-size:18.85px;font-weight:400;color:#767e82;letter-spacing:0.529px;">ds@pouchantion.com</div>
<div class="t" style="left:1395.00px;top:1167.86px;font-size:19.95px;font-weight:400;color:#1b1f22;letter-spacing:0.000px;">5</div>
<div class="t" style="left:1561.42px;top:1168.10px;font-size:19.66px;font-weight:400;color:#1b1f22;letter-spacing:0.000px;">2</div>
<div class="b" style="left:1729.4px;top:1160.35px;width:126.3px;height:34.5px;background:#eafbe0;border:1.8px solid #72cf55;border-radius:5px;box-sizing:border-box"></div>
<div class="t" style="left:1741.45px;top:1168.79px;font-size:18.73px;font-weight:400;color:#5cc23e;letter-spacing:0.856px;-webkit-text-stroke:0.49px #5cc23e;">Checked-in</div>
<div class="b" style="left:434px;top:1223.6px;width:1592px;height:1.8px;background:#edf2f3"></div>
<div class="t" style="left:467.16px;top:1260.92px;font-size:20.53px;font-weight:400;color:#45b0c9;letter-spacing:-0.097px;">152456</div>
<div class="t" style="left:649.80px;top:1247.59px;font-size:19.38px;font-weight:400;color:#1b1f22;letter-spacing:-0.139px;">Aug 14, 2021</div>
<div class="t" style="left:649.01px;top:1277.13px;font-size:19.81px;font-weight:400;color:#767e82;letter-spacing:0.567px;">02:00:00 PM</div>
<div class="t" style="left:859.00px;top:1247.59px;font-size:19.38px;font-weight:400;color:#1b1f22;letter-spacing:-0.120px;">Aug 14, 2021</div>
<div class="t" style="left:859.21px;top:1277.13px;font-size:19.81px;font-weight:400;color:#767e82;letter-spacing:0.567px;">02:00:00 PM</div>
<div class="t" style="left:1067.49px;top:1247.44px;font-size:18.85px;font-weight:400;color:#1b1f22;letter-spacing:0.663px;">David Smith</div>
<div class="t" style="left:1068.25px;top:1279.04px;font-size:18.85px;font-weight:400;color:#767e82;letter-spacing:0.529px;">ds@pouchantion.com</div>
<div class="t" style="left:1395.00px;top:1261.51px;font-size:19.95px;font-weight:400;color:#1b1f22;letter-spacing:0.000px;">5</div>
<div class="t" style="left:1561.42px;top:1261.75px;font-size:19.66px;font-weight:400;color:#1b1f22;letter-spacing:0.000px;">2</div>
<div class="b" style="left:1729.4px;top:1255.0px;width:183.1px;height:34.5px;background:#e1eefc;border:1.8px solid #3990ea;border-radius:5px;box-sizing:border-box"></div>
<div class="t" style="left:1741.81px;top:1263.42px;font-size:18.87px;font-weight:400;color:#2a83df;letter-spacing:0.644px;-webkit-text-stroke:0.49px #2a83df;">To Be Checked-in</div>
<div class="b" style="left:434px;top:1318.25px;width:1592px;height:1.8px;background:#edf2f3"></div>
<div class="t" style="left:467.16px;top:1355.57px;font-size:20.53px;font-weight:400;color:#45b0c9;letter-spacing:-0.097px;">152456</div>
<div class="t" style="left:649.80px;top:1343.24px;font-size:19.38px;font-weight:400;color:#1b1f22;letter-spacing:-0.139px;">Aug 14, 2021</div>
<div class="t" style="left:649.01px;top:1371.78px;font-size:19.81px;font-weight:400;color:#767e82;letter-spacing:0.567px;">02:00:00 PM</div>
<div class="t" style="left:859.00px;top:1343.24px;font-size:19.38px;font-weight:400;color:#1b1f22;letter-spacing:-0.120px;">Aug 14, 2021</div>
<div class="t" style="left:859.21px;top:1371.78px;font-size:19.81px;font-weight:400;color:#767e82;letter-spacing:0.567px;">02:00:00 PM</div>
<div class="t" style="left:1067.49px;top:1342.09px;font-size:18.85px;font-weight:400;color:#1b1f22;letter-spacing:0.663px;">David Smith</div>
<div class="t" style="left:1068.25px;top:1373.69px;font-size:18.85px;font-weight:400;color:#767e82;letter-spacing:0.529px;">ds@pouchantion.com</div>
<div class="t" style="left:1395.00px;top:1357.16px;font-size:19.95px;font-weight:400;color:#1b1f22;letter-spacing:0.000px;">5</div>
<div class="t" style="left:1561.42px;top:1357.40px;font-size:19.66px;font-weight:400;color:#1b1f22;letter-spacing:0.000px;">2</div>
<div class="b" style="left:1729.4px;top:1349.65px;width:183.1px;height:34.5px;background:#e1eefc;border:1.8px solid #3990ea;border-radius:5px;box-sizing:border-box"></div>
<div class="t" style="left:1741.81px;top:1358.07px;font-size:18.87px;font-weight:400;color:#2a83df;letter-spacing:0.644px;-webkit-text-stroke:0.49px #2a83df;">To Be Checked-in</div>
<div class="b" style="left:434px;top:1412.9px;width:1592px;height:1.8px;background:#edf2f3"></div>
<div class="t" style="left:467.16px;top:1451.22px;font-size:20.53px;font-weight:400;color:#45b0c9;letter-spacing:-0.097px;">152456</div>
<div class="t" style="left:649.80px;top:1436.89px;font-size:19.38px;font-weight:400;color:#1b1f22;letter-spacing:-0.139px;">Aug 14, 2021</div>
<div class="t" style="left:649.01px;top:1466.43px;font-size:19.81px;font-weight:400;color:#767e82;letter-spacing:0.567px;">02:00:00 PM</div>
<div class="t" style="left:859.00px;top:1436.89px;font-size:19.38px;font-weight:400;color:#1b1f22;letter-spacing:-0.120px;">Aug 14, 2021</div>
<div class="t" style="left:859.21px;top:1466.43px;font-size:19.81px;font-weight:400;color:#767e82;letter-spacing:0.567px;">02:00:00 PM</div>
<div class="t" style="left:1067.49px;top:1436.74px;font-size:18.85px;font-weight:400;color:#1b1f22;letter-spacing:0.663px;">David Smith</div>
<div class="t" style="left:1068.25px;top:1468.34px;font-size:18.85px;font-weight:400;color:#767e82;letter-spacing:0.529px;">ds@pouchantion.com</div>
<div class="t" style="left:1395.00px;top:1451.81px;font-size:19.95px;font-weight:400;color:#1b1f22;letter-spacing:0.000px;">5</div>
<div class="t" style="left:1561.42px;top:1452.05px;font-size:19.66px;font-weight:400;color:#1b1f22;letter-spacing:0.000px;">2</div>
<div class="b" style="left:1729.4px;top:1444.3px;width:126.3px;height:34.5px;background:#eafbe0;border:1.8px solid #72cf55;border-radius:5px;box-sizing:border-box"></div>
<div class="t" style="left:1741.45px;top:1452.74px;font-size:18.73px;font-weight:400;color:#5cc23e;letter-spacing:0.856px;-webkit-text-stroke:0.49px #5cc23e;">Checked-in</div>
<div class="b" style="left:434px;top:1507.55px;width:1592px;height:1.8px;background:#edf2f3"></div>
<div class="t" style="left:467.16px;top:1544.87px;font-size:20.53px;font-weight:400;color:#45b0c9;letter-spacing:-0.097px;">152456</div>
<div class="t" style="left:649.80px;top:1531.54px;font-size:19.38px;font-weight:400;color:#1b1f22;letter-spacing:-0.139px;">Aug 14, 2021</div>
<div class="t" style="left:649.01px;top:1561.08px;font-size:19.81px;font-weight:400;color:#767e82;letter-spacing:0.567px;">02:00:00 PM</div>
<div class="t" style="left:859.00px;top:1531.54px;font-size:19.38px;font-weight:400;color:#1b1f22;letter-spacing:-0.120px;">Aug 14, 2021</div>
<div class="t" style="left:859.21px;top:1561.08px;font-size:19.81px;font-weight:400;color:#767e82;letter-spacing:0.567px;">02:00:00 PM</div>
<div class="t" style="left:1067.49px;top:1531.39px;font-size:18.85px;font-weight:400;color:#1b1f22;letter-spacing:0.663px;">David Smith</div>
<div class="t" style="left:1068.25px;top:1562.99px;font-size:18.85px;font-weight:400;color:#767e82;letter-spacing:0.529px;">ds@pouchantion.com</div>
<div class="t" style="left:1395.00px;top:1546.46px;font-size:19.95px;font-weight:400;color:#1b1f22;letter-spacing:0.000px;">5</div>
<div class="t" style="left:1561.42px;top:1545.70px;font-size:19.66px;font-weight:400;color:#1b1f22;letter-spacing:0.000px;">2</div>
<div class="b" style="left:1729.4px;top:1538.95px;width:183.1px;height:34.5px;background:#e1eefc;border:1.8px solid #3990ea;border-radius:5px;box-sizing:border-box"></div>
<div class="t" style="left:1741.81px;top:1547.37px;font-size:18.87px;font-weight:400;color:#2a83df;letter-spacing:0.644px;-webkit-text-stroke:0.49px #2a83df;">To Be Checked-in</div>
<div class="b" style="left:434px;top:1602.2px;width:1592px;height:1.8px;background:#edf2f3"></div>
<div class="t" style="left:467.16px;top:1639.52px;font-size:20.53px;font-weight:400;color:#45b0c9;letter-spacing:-0.097px;">152456</div>
<div class="t" style="left:649.80px;top:1627.19px;font-size:19.38px;font-weight:400;color:#1b1f22;letter-spacing:-0.139px;">Aug 14, 2021</div>
<div class="t" style="left:649.01px;top:1654.73px;font-size:19.81px;font-weight:400;color:#767e82;letter-spacing:0.567px;">02:00:00 PM</div>
<div class="t" style="left:859.00px;top:1627.19px;font-size:19.38px;font-weight:400;color:#1b1f22;letter-spacing:-0.120px;">Aug 14, 2021</div>
<div class="t" style="left:859.21px;top:1654.73px;font-size:19.81px;font-weight:400;color:#767e82;letter-spacing:0.567px;">02:00:00 PM</div>
<div class="t" style="left:1067.49px;top:1626.04px;font-size:18.85px;font-weight:400;color:#1b1f22;letter-spacing:0.663px;">David Smith</div>
<div class="t" style="left:1068.25px;top:1657.64px;font-size:18.85px;font-weight:400;color:#767e82;letter-spacing:0.529px;">ds@pouchantion.com</div>
<div class="t" style="left:1395.00px;top:1641.11px;font-size:19.95px;font-weight:400;color:#1b1f22;letter-spacing:0.000px;">5</div>
<div class="t" style="left:1561.42px;top:1641.35px;font-size:19.66px;font-weight:400;color:#1b1f22;letter-spacing:0.000px;">2</div>
<div class="b" style="left:1729.4px;top:1633.6px;width:183.1px;height:34.5px;background:#e1eefc;border:1.8px solid #3990ea;border-radius:5px;box-sizing:border-box"></div>
<div class="t" style="left:1741.81px;top:1642.02px;font-size:18.87px;font-weight:400;color:#2a83df;letter-spacing:0.644px;-webkit-text-stroke:0.49px #2a83df;">To Be Checked-in</div>
<div class="b" style="left:1629.3px;top:1733px;width:45.5px;height:45.5px;border:1.3px solid #dde2e4;border-radius:6px;box-sizing:border-box"></div>
<div class="b" style="left:1687.3px;top:1733px;width:45.8px;height:45.5px;border:2px solid #45b0c9;border-radius:6px;box-sizing:border-box"></div>
<div class="b" style="left:1745.6px;top:1733px;width:45.8px;height:45.5px;border:1.3px solid #dde2e4;border-radius:6px;box-sizing:border-box"></div>
<div class="b" style="left:1804.3px;top:1733px;width:45.5px;height:45.5px;border:1.3px solid #dde2e4;border-radius:6px;box-sizing:border-box"></div>
<div class="b" style="left:1862.6px;top:1733px;width:162.9px;height:45.6px;border:1.3px solid #dde2e4;border-radius:6px;box-sizing:border-box"></div>
<svg class="b" style="left:1630px;top:1735px" width="390" height="40" viewBox="1630 1735 390 40" fill="none"><path d="M1656 1748.5 L1647.8 1755.5 L1656 1762.5" stroke="#5f676b" stroke-width="3" stroke-linecap="round" stroke-linejoin="round"/><path d="M1824 1748.5 L1832.2 1755.5 L1824 1762.5" stroke="#5f676b" stroke-width="3" stroke-linecap="round" stroke-linejoin="round"/><path d="M1996.1 1753.1 H2006.3 L2001.2 1758.9 Z" fill="#5b6367"/></svg>
<div class="t" style="left:1706.44px;top:1744.78px;font-size:19.51px;font-weight:400;color:#45b0c9;letter-spacing:0.000px;">1</div>
<div class="t" style="left:1763.04px;top:1745.01px;font-size:19.23px;font-weight:400;color:#5b6367;letter-spacing:0.000px;">2</div>
<div class="t" style="left:1878.44px;top:1744.87px;font-size:19.52px;font-weight:400;color:#5b6367;letter-spacing:0.230px;">10 per page</div>
<div class="t" style="left:641.53px;top:1851.70px;font-size:17.48px;font-weight:400;color:#2c5864;letter-spacing:-0.158px;">Copyright © 2021 PouchNATION. All rights reserved.</div>
<div class="t" style="left:1090.26px;top:1853.19px;font-size:16.79px;font-weight:400;color:#899195;letter-spacing:0.048px;">Terms of Use</div>
<div class="t" style="left:1236.26px;top:1853.19px;font-size:16.79px;font-weight:400;color:#899195;letter-spacing:0.041px;">Privacy</div>
<div class="t" style="left:1337.46px;top:1853.19px;font-size:16.79px;font-weight:400;color:#899195;letter-spacing:0.090px;">Release Notes</div>
<div class="t" style="left:1496.76px;top:1853.19px;font-size:16.79px;font-weight:400;color:#899195;letter-spacing:0.013px;">Glossary</div>
<div class="t" style="left:1610.06px;top:1853.19px;font-size:16.79px;font-weight:400;color:#899195;letter-spacing:0.349px;">Feedback</div>
<div class="t" style="left:1733.72px;top:1851.57px;font-size:17.51px;font-weight:400;color:#899195;letter-spacing:-0.212px;">Contact Us</div>
</body></html>
